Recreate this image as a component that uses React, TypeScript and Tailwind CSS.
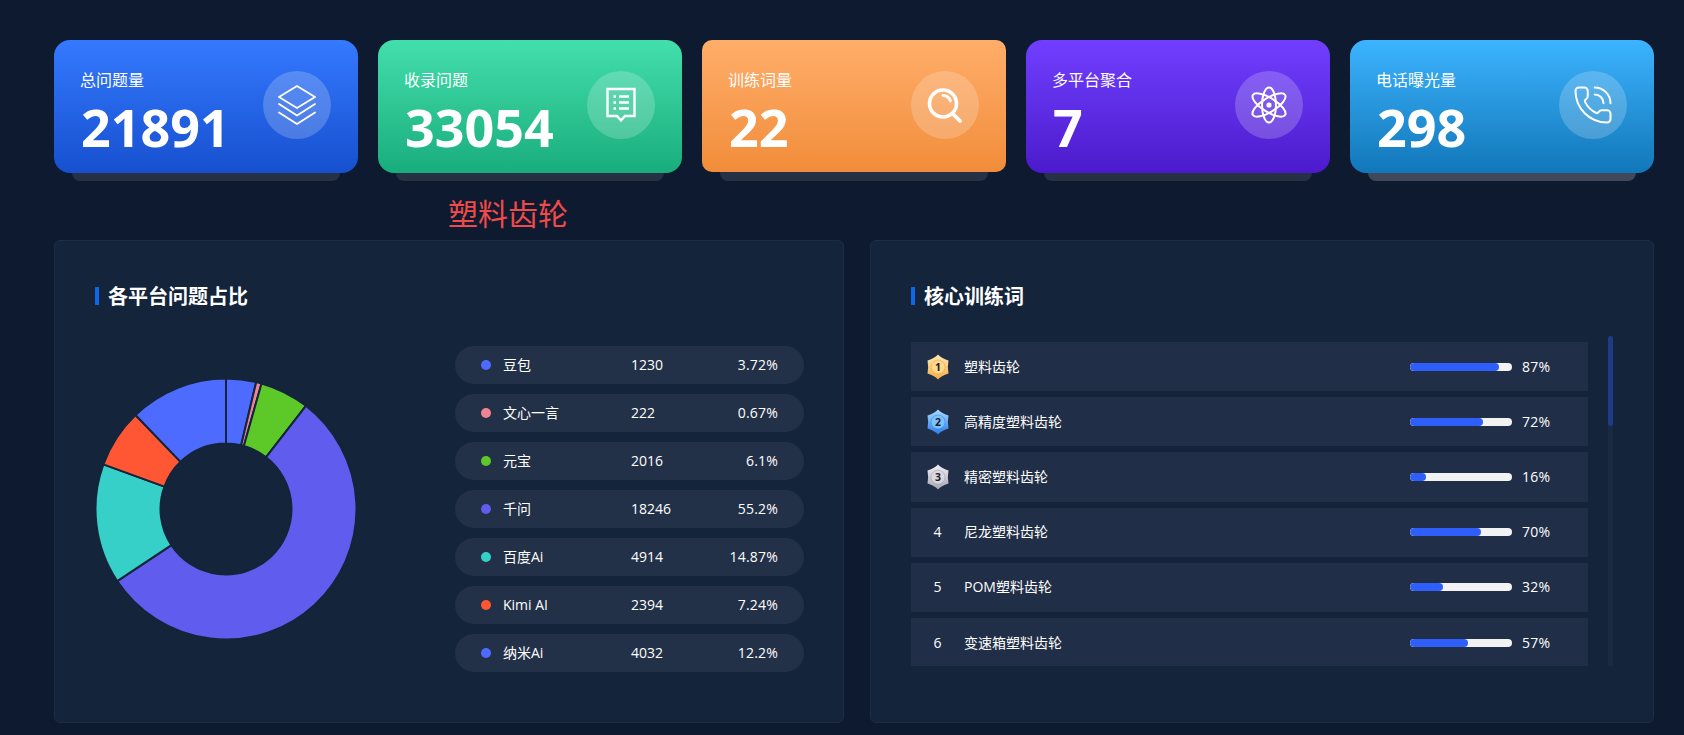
import { PhoneCall } from "lucide-react";
import type { ReactNode } from "react";

const FONT = "font-['Open_Sans','Noto_Sans_CJK_SC',sans-serif]";

function LayersIcon() {
  return (
    <svg width="40" height="40" viewBox="0 0 40 40" fill="none" stroke="white" strokeWidth="1.8" strokeLinejoin="round" strokeLinecap="round">
      <path d="M20 1 L38 12 L20 23 L2 12 Z" />
      <path d="M2 19 L20 30.5 L38 19" />
      <path d="M2 27.5 L20 39 L38 27.5" />
    </svg>
  );
}

function DocIcon() {
  return (
    <svg width="30" height="36" viewBox="0 0 30 36" fill="none" stroke="white" strokeWidth="2.4">
      <path d="M1.5 2 H28.5 V29 H19 L15 33.5 L11 29 H1.5 Z" strokeLinejoin="miter" />
      <path d="M7.5 9.5 H10 M13 9.5 H23 M7.5 15.5 H10 M13 15.5 H23 M7.5 21.5 H10 M13 21.5 H23" />
    </svg>
  );
}

function SearchIcon() {
  return (
    <svg width="36" height="36" viewBox="0 0 36 36" fill="none" stroke="white" strokeLinecap="round">
      <circle cx="16" cy="16.5" r="13.5" strokeWidth="3.6" />
      <path d="M27 28 L33 34" strokeWidth="3.8" />
      <path d="M16 8.5 A8 8 0 0 1 23.5 14" strokeWidth="2.8" />
    </svg>
  );
}

function AtomIcon() {
  return (
    <svg width="38" height="38" viewBox="0 0 38 38" fill="none" stroke="white" strokeWidth="2">
      <ellipse cx="19" cy="19" rx="7" ry="17.5" />
      <ellipse cx="19" cy="19" rx="7" ry="19" transform="rotate(58 19 19)" />
      <ellipse cx="19" cy="19" rx="7" ry="19" transform="rotate(-58 19 19)" />
      <circle cx="19" cy="19" r="2.6" fill="white" stroke="none" />
    </svg>
  );
}

type CardData = {
  label: string;
  value: string;
  gradient: string;
  icon: ReactNode;
  radius: string;
  shadow: string;
  height: string;
};

const cards: CardData[] = [
  { label: "总问题量", value: "21891", gradient: "from-[#3579ff] to-[#1650cf]", icon: <LayersIcon />, radius: "rounded-2xl", shadow: "bg-[#263145]", height: "h-[133px]" },
  { label: "收录问题", value: "33054", gradient: "from-[#42dfac] to-[#18ad7c]", icon: <DocIcon />, radius: "rounded-2xl", shadow: "bg-[#263145]", height: "h-[133px]" },
  { label: "训练词量", value: "22", gradient: "from-[#ffad69] to-[#f18d39]", icon: <SearchIcon />, radius: "rounded-[10px]", shadow: "bg-[#263145]", height: "h-[132px]" },
  { label: "多平台聚合", value: "7", gradient: "from-[#713eff] to-[#4c1acc]", icon: <AtomIcon />, radius: "rounded-2xl", shadow: "bg-[#263145]", height: "h-[133px]" },
  { label: "电话曝光量", value: "298", gradient: "from-[#3cb4ff] to-[#1077b9]", icon: <PhoneCall size={42} strokeWidth={1.15} color="white" />, radius: "rounded-2xl", shadow: "bg-[#414859]", height: "h-[133px]" },
];

function StatCard({ card }: { card: CardData }) {
  return (
    <div className="relative w-[304px] h-[133px]">
      <div className={`absolute left-[18px] right-[18px] top-[120px] h-[21px] rounded-lg ${card.shadow}`} />
      <div className={`relative flex items-start justify-between pt-[28px] pl-[26px] pr-[27px] bg-gradient-to-b ${card.gradient} ${card.radius} ${card.height}`}>
        <div className="text-white">
          <div className="text-base leading-[24px]">{card.label}</div>
          <div className="text-[52px] leading-[60px] font-bold mt-[5px] ml-[1px]">{card.value}</div>
        </div>
        <div className="w-[68px] h-[68px] rounded-full bg-white/20 flex items-center justify-center mt-[3px]">{card.icon}</div>
      </div>
    </div>
  );
}

const platforms = [
  { name: "豆包", value: "1230", pct: 3.72, color: "#4e6bff" },
  { name: "文心一言", value: "222", pct: 0.67, color: "#ee8494" },
  { name: "元宝", value: "2016", pct: 6.1, color: "#5cc928" },
  { name: "千问", value: "18246", pct: 55.2, color: "#605cee" },
  { name: "百度Ai", value: "4914", pct: 14.87, color: "#37d0c8" },
  { name: "Kimi AI", value: "2394", pct: 7.24, color: "#ff5733" },
  { name: "纳米Ai", value: "4032", pct: 12.2, color: "#4e6bff" },
];

function arc(start: number, end: number, R: number, r: number, c: number) {
  const p = (a: number, rad: number) => {
    const t = (a / 100) * 2 * Math.PI;
    return `${(c + rad * Math.sin(t)).toFixed(2)} ${(c - rad * Math.cos(t)).toFixed(2)}`;
  };
  const large = end - start > 50 ? 1 : 0;
  return `M${p(start, R)} A${R} ${R} 0 ${large} 1 ${p(end, R)} L${p(end, r)} A${r} ${r} 0 ${large} 0 ${p(start, r)} Z`;
}

function Donut() {
  let acc = 0;
  return (
    <svg width="262" height="262" viewBox="0 0 262 262" className="shrink-0">
      {platforms.map((s) => {
        const d = arc(acc, acc + s.pct, 130.5, 65.5, 131);
        acc += s.pct;
        return <path key={s.name} d={d} fill={s.color} stroke="#13243b" strokeWidth="2" strokeLinejoin="round" />;
      })}
    </svg>
  );
}

function PanelTitle({ children }: { children: ReactNode }) {
  return (
    <div className="flex items-center h-[18px]">
      <div className="w-1 h-[18px] bg-[#0f66e6]" />
      <div className="ml-[9px] text-xl leading-[18px] font-bold text-white pt-[2px]">{children}</div>
    </div>
  );
}

const words = [
  { name: "塑料齿轮", pct: 87 },
  { name: "高精度塑料齿轮", pct: 72 },
  { name: "精密塑料齿轮", pct: 16 },
  { name: "尼龙塑料齿轮", pct: 70 },
  { name: "POM塑料齿轮", pct: 32 },
  { name: "变速箱塑料齿轮", pct: 57 },
];

const medals = [
  { a: "#ffeab4", b: "#f4ae48", inner: "#ffd98a", edge: "#d99232" },
  { a: "#a9dcff", b: "#2a7cea", inner: "#7cc3fc", edge: "#2468d0" },
  { a: "#f4f3f7", b: "#a5a4b2", inner: "#d9d8e1", edge: "#8f8e9c" },
];

function Medal({ n }: { n: number }) {
  const m = medals[n - 1];
  const id = `medal${n}`;
  return (
    <svg width="24" height="26" viewBox="0 0 24 26">
      <defs>
        <linearGradient id={id} x1="0" y1="0" x2="0" y2="1">
          <stop offset="0" stopColor={m.a} />
          <stop offset="1" stopColor={m.b} />
        </linearGradient>
      </defs>
      <path d="M12 0.5 Q15 4 22.5 6.5 Q21.2 13 22.5 19.5 Q15 22 12 25.5 Q9 22 1.5 19.5 Q2.8 13 1.5 6.5 Q9 4 12 0.5 Z" fill={`url(#${id})`} />
      <circle cx="12" cy="13" r="7" fill={m.inner} stroke={m.edge} strokeOpacity="0.5" strokeWidth="0.8" />
      <text x="12" y="16.6" textAnchor="middle" fontSize="10.5" fontWeight="700" fill="#1c1c28">{n}</text>
    </svg>
  );
}

export default function App() {
  return (
    <div className={`min-h-[735px] bg-[#0d1a30] pt-10 pl-[54px] pr-[30px] ${FONT}`}>
      <div className="flex gap-5">
        {cards.map((c) => (
          <StatCard key={c.label} card={c} />
        ))}
      </div>

      <div className="h-[67px] pl-[394px] pt-[22px] text-[30px] leading-[38px] text-[#f04a4a]">塑料齿轮</div>

      <div className="flex gap-[26px]">
        <div className="w-[790px] h-[483px] rounded-md border border-[#1e2d45] bg-[#13243b] pl-10 pt-[46px]">
          <PanelTitle>各平台问题占比</PanelTitle>
          <div className="mt-[41px] flex items-center gap-[99px]">
            <Donut />
            <div className="w-[349px] flex flex-col gap-[10px] ml-[-1px]">
              {platforms.map((p) => (
                <div key={p.name} className="h-[38px] rounded-full bg-[#233148] flex items-center px-[26px] text-sm text-white">
                  <span className="w-2.5 h-2.5 rounded-full shrink-0" style={{ backgroundColor: p.color }} />
                  <span className="ml-3 w-[128px] shrink-0">{p.name}</span>
                  <span className="flex-1">{p.value}</span>
                  <span className="text-right tracking-[0.2px]">{p.pct}%</span>
                </div>
              ))}
            </div>
          </div>
        </div>

        <div className="w-[784px] h-[483px] rounded-md border border-[#1e2d45] bg-[#13243b] pl-10 pt-[46px]">
          <PanelTitle>核心训练词</PanelTitle>
          <div className="mt-[31px] flex gap-5 h-[330px]">
            <div className="w-[677px] h-[330px] overflow-hidden pt-[6px] flex flex-col gap-[6px]">
              {words.map((w, i) => (
                <div key={w.name} className="h-[49.2px] shrink-0 bg-[#202e48] flex items-center text-sm text-white">
                  <div className="w-[53px] flex justify-center">
                    {i < 3 ? <Medal n={i + 1} /> : <span>{i + 1}</span>}
                  </div>
                  <div className="flex-1">{w.name}</div>
                  <div className="w-[102px] h-2 rounded-full bg-[#f2f2f2] overflow-hidden">
                    <div className="h-full rounded-full bg-[#2f5ffb]" style={{ width: `${w.pct}%` }} />
                  </div>
                  <div className="w-[76px] pl-[10px] tracking-[0.2px]">{w.pct}%</div>
                </div>
              ))}
            </div>
            <div className="w-[5px] h-[330px] rounded-t bg-[#1a2a42]">
              <div className="h-[90px] rounded bg-[#1f3a86]" />
            </div>
          </div>
        </div>
      </div>
    </div>
  );
}
